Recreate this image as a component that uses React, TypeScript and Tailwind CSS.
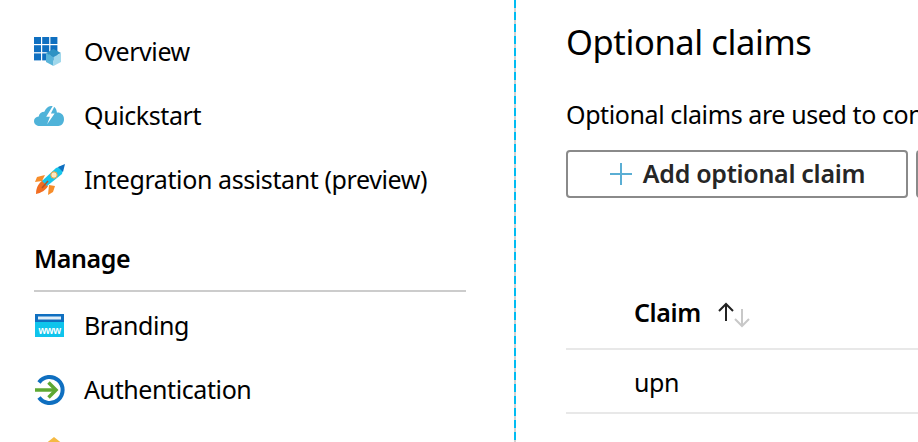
import type { ReactNode } from 'react';

function OverviewIcon() {
  return (
    <svg width="32" height="32" viewBox="0 0 32 32">
      {[0, 1, 2].map((r) =>
        [0, 1, 2].map((c) => (
          <rect key={`${r}${c}`} x={c * 8.2} y={1 + r * 8.2} width="7" height="7" fill="#0f6fc0" />
        )),
      )}
      <path d="M12 17l7.500-4 7.500 4-7.500 4z" fill="#2f93c4" />
      <path d="M12 17l7.500 4v9l-7.500-4z" fill="#59b4d9" />
      <path d="M19.500 21l7.500-4v9l-7.500 4z" fill="#a0d8ec" />
    </svg>
  );
}

function QuickstartIcon() {
  return (
    <svg width="30" height="20" viewBox="0 0 32 24" preserveAspectRatio="none">
      <path
        d="M6 24c-3 0-6-2-6-6 0-3 2-5 5-5.500C5.500 9 8 7 11 7c1.500-4 4-7 7-7 4 0 6 3 6.500 8 3.500-.5 7.500 2 7.500 8 0 5-3 8-6 8z"
        fill="#4fb3d9"
      />
      <path d="M20 0l-7 13h4l-3 9 8-13h-4l4-9z" fill="#ffffff" />
    </svg>
  );
}

function RocketIcon() {
  return (
    <svg width="32" height="32" viewBox="0 0 32 32">
      <path d="M11 11L3 13l-2 5 7-1z" fill="#f78d2a" />
      <path d="M15 21l-1 10 5-3 2-6z" fill="#f78d2a" />
      <path d="M9 16c-4 3-7 7-7 14 5-1 10-4 12-8z" fill="#f26d21" />
      <path d="M8 17L22 4l8-3-2 9-15 12z" fill="#18c5ea" />
      <path d="M24 3l7-3-2 8z" fill="#0f6fc0" />
      <circle cx="20" cy="11" r="3.200" fill="#fde9c4" stroke="#e9a33f" strokeWidth="1" />
      <path d="M8 24l6-7" stroke="#b4532a" strokeWidth="1.500" />
    </svg>
  );
}

function BrandingIcon() {
  return (
    <svg width="32" height="26" viewBox="0 0 32 26">
      <rect x="1" y="1" width="29" height="23" fill="#0fc4ec" />
      <rect x="1" y="1" width="29" height="8" fill="#0f6fc0" />
      <rect x="4" y="3.500" width="23" height="3" fill="#dfeef8" />
      <text x="15.500" y="20.500" textAnchor="middle" fill="#ffffff" fontSize="10" fontWeight="700" fontFamily="Liberation Sans, sans-serif">
        www
      </text>
    </svg>
  );
}

function AuthIcon() {
  return (
    <svg width="32" height="32" viewBox="0 0 32 32">
      <path d="M5 8.500A13 13 0 1 1 5 23.500" fill="none" stroke="#0f6fc0" strokeWidth="4" />
      <path d="M1 16h21" stroke="#5ea833" strokeWidth="3.500" />
      <path d="M14.500 8.500L22 16l-7.500 7.500" fill="none" stroke="#5ea833" strokeWidth="3.500" />
    </svg>
  );
}

function NavItem({ icon, label }: { icon: ReactNode; label: string }) {
  return (
    <div className="flex h-16 items-center">
      <div className="flex w-[50px] shrink-0 items-center">{icon}</div>
      <span className="text-[25px] text-black">{label}</span>
    </div>
  );
}

export default function App() {
  return (
    <div className="flex h-[442px] w-[918px] overflow-hidden bg-white font-['Noto_Sans',sans-serif] tracking-[-0.4px]">
      {/* Sidebar */}
      <aside className="w-[514px] shrink-0 pl-[34px] pr-[48px] pt-5">
        <NavItem icon={<OverviewIcon />} label="Overview" />
        <NavItem icon={<QuickstartIcon />} label="Quickstart" />
        <NavItem icon={<RocketIcon />} label="Integration assistant (preview)" />
        <div className="mt-[29px] border-b-2 border-[#cccccc] pb-[15px] text-[25px] leading-[34px] font-semibold text-black">
          Manage
        </div>
        <div className="mt-[2px]">
          <NavItem icon={<BrandingIcon />} label="Branding" />
          <NavItem icon={<AuthIcon />} label="Authentication" />
          <div className="mt-[15px] ml-[10px] h-0 w-0 border-x-[10px] border-b-[8px] border-x-transparent border-b-[#f5b942]" />
        </div>
      </aside>

      {/* Resize handle */}
      <div className="h-full w-[2px] shrink-0 bg-[repeating-linear-gradient(to_bottom,#00bcf2_0,#00bcf2_8px,#d2d2d2_8px,#d2d2d2_12px)]" />

      {/* Content */}
      <main className="min-w-0 flex-1 pl-[50px]">
        <h1 className="pt-[18px] text-[34.5px] leading-[48px] font-normal text-black">Optional claims</h1>
        <p className="mt-[31px] text-[25px] leading-[34px] whitespace-nowrap text-black">
          Optional claims are used to configure
        </p>
        <div className="mt-[19px] flex gap-[8px]">
          <button className="flex h-[48px] w-[342px] shrink-0 items-center justify-center gap-[10px] rounded-[4px] border-2 border-[#8a8a8a] bg-white tracking-[-0.3px]">
            <svg width="24" height="24" viewBox="0 0 24 24" stroke="#5aaed4" strokeWidth="2">
              <path d="M12 1v22M1 12h22" />
            </svg>
            <span className="text-[25px] font-semibold text-[#262626]">Add optional claim</span>
          </button>
          <div className="h-[48px] w-[40px] shrink-0 rounded-[4px] border-2 border-[#8a8a8a]" />
        </div>

        {/* Claims table */}
        <div className="mt-[84px] flex h-[68px] items-center border-b-2 border-[#e8e8e8] pb-1 pl-[68px]">
          <span className="text-[25px] font-semibold text-black">Claim</span>
          <svg className="mt-1 ml-[16px]" width="34" height="26" viewBox="0 0 34 26" fill="none" strokeWidth="2">
            <path d="M9 19V2M2 9l7-7 7 7" stroke="#222222" />
            <path d="M25 7v17M18 17l7 7 7-7" stroke="#c8c8c8" />
          </svg>
        </div>
        <div className="flex h-[64px] items-center border-b-2 border-[#e8e8e8] pt-1 pl-[68px]">
          <span className="text-[25px] text-black">upn</span>
        </div>
      </main>
    </div>
  );
}
